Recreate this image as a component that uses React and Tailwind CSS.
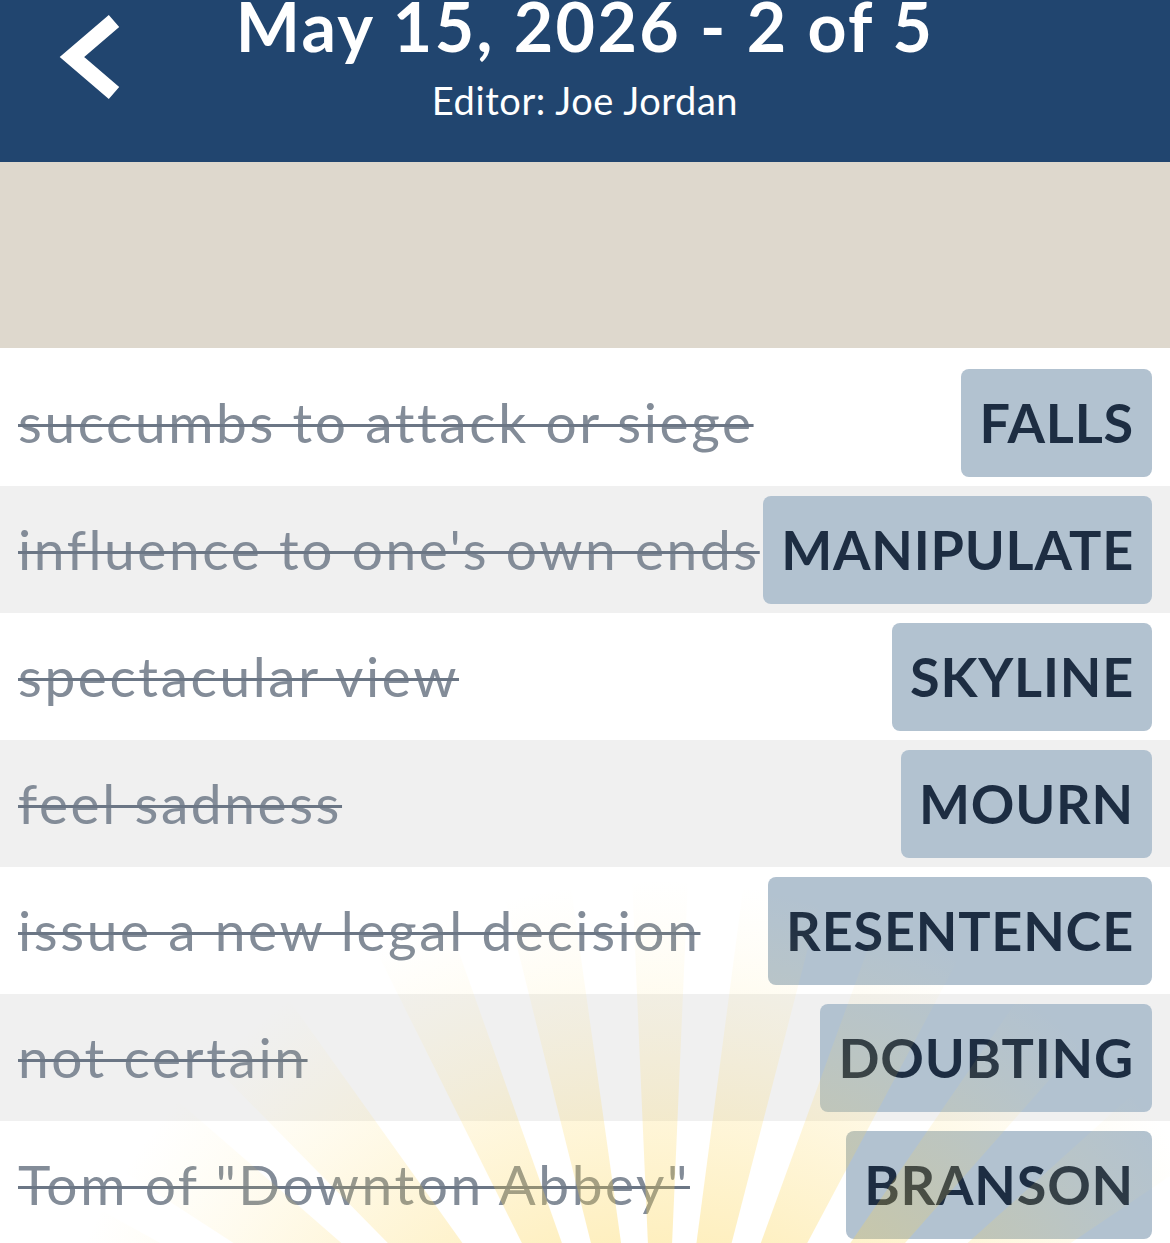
const clues = [
  { clue: 'succumbs to attack or siege', answer: 'FALLS' },
  { clue: "influence to one's own ends", answer: 'MANIPULATE' },
  { clue: 'spectacular view', answer: 'SKYLINE' },
  { clue: 'feel sadness', answer: 'MOURN' },
  { clue: 'issue a new legal decision', answer: 'RESENTENCE' },
  { clue: 'not certain', answer: 'DOUBTING' },
  { clue: 'Tom of "Downton Abbey"', answer: 'BRANSON' },
];

// angles (degrees from straight up) and widths of the sun rays
const rays = [
  [-66, 10], [-53, 8], [-40, 9], [-23, 7], [-11, 6], [0, 5], [11, 7], [24, 8], [38, 7], [52, 8], [66, 7],
];

// sunburst glow over the bottom of the list
function Sunburst() {
  const cx = 660;
  const cy = 1520;
  const r = 1100;
  const toXY = (deg) => {
    const a = (deg * Math.PI) / 180;
    return [cx + r * Math.sin(a), cy - r * Math.cos(a)];
  };
  return (
    <svg className="pointer-events-none absolute inset-0 h-full w-full" viewBox="0 0 1170 1243">
      <defs>
        <radialGradient id="rayFade" gradientUnits="userSpaceOnUse" cx={cx} cy={cy} r="640">
          <stop offset="0.35" stopColor="#fcd34d" stopOpacity="0.42" />
          <stop offset="0.65" stopColor="#fcd34d" stopOpacity="0.2" />
          <stop offset="1" stopColor="#fde68a" stopOpacity="0" />
        </radialGradient>
      </defs>
      {rays.map(([deg, w]) => {
        const [x0, y0] = toXY(deg - w / 2);
        const [x1, y1] = toXY(deg + w / 2);
        return <path key={deg} d={`M${cx},${cy} L${x0},${y0} L${x1},${y1} Z`} fill="url(#rayFade)" />;
      })}
    </svg>
  );
}

export default function App() {
  return (
    <div
      className="relative h-[1243px] w-[1170px] overflow-hidden bg-white"
      style={{ fontFamily: 'Lato, "Open Sans", sans-serif' }}
    >
      {/* Header */}
      <header className="relative h-[162px] bg-[#21456f] text-white">
        <svg className="absolute left-[58px] top-[11px] h-[92px] w-[64px]" viewBox="0 0 64 92">
          <path d="M56 10 L14 46 L56 82" fill="none" stroke="white" strokeWidth="16" />
        </svg>
        <div className="flex flex-col items-center pt-[1px]">
          <h1 className="text-[68px] font-bold leading-[50px] tracking-[2.4px]">May 15, 2026 - 2 of 5</h1>
          <p className="mt-[27px] text-[38px] leading-[44px] tracking-[0.6px]">Editor: Joe Jordan</p>
        </div>
      </header>

      {/* Banner space */}
      <div className="h-[186px] bg-[#ded8cd]" />

      {/* Clue list */}
      <div className="pt-[11px]">
        {clues.map((c, i) => (
          <div
            key={c.answer}
            className={`flex h-[127px] items-center justify-between px-[18px] ${
              i % 2 === 1 ? 'bg-[#f0f0f0]' : 'bg-white'
            }`}
          >
            <span className="whitespace-nowrap text-[55px] tracking-[2.6px] text-[#838c98] line-through decoration-[#6b7685] decoration-[3px]">
              {c.clue}
            </span>
            <span className="flex h-[108px] shrink-0 items-center rounded-[8px] bg-[#b2c2d0] px-[18px] text-[54px] font-bold tracking-[0.8px] text-[#1d2d42]">
              {c.answer}
            </span>
          </div>
        ))}
      </div>

      <Sunburst />
    </div>
  );
}
